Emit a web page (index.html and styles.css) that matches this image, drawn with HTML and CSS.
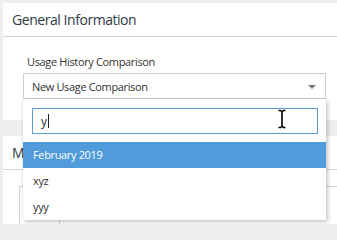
FILE: index.html
```html
<!DOCTYPE html>
<html>
<head>
<meta charset="utf-8">
<link rel="stylesheet" href="styles.css">
</head>
<body>
<div class="page">
  <section class="card card-general">
    <header class="card-header">General Information</header>
    <div class="card-body">
      <label class="field-label">Usage History Comparison</label>
      <div class="select-wrap">
        <div class="select">
          <span class="select-value">New Usage Comparison</span>
          <span class="select-arrow"></span>
        </div>
        <div class="dropdown">
          <div class="search">
            <span class="search-text">y</span><span class="caret"></span>
          </div>
          <ul class="options">
            <li class="option active">February 2019</li>
            <li class="option">xyz</li>
            <li class="option">yyy</li>
          </ul>
        </div>
      </div>
    </div>
  </section>
  <section class="card card-second">
    <header class="card-header">M</header>
    <div class="card-body2">
      <div class="table">
        <div class="cell"></div>
        <div class="cell wide"></div>
      </div>
    </div>
  </section>
</div>
<svg class="ibeam" width="10" height="20" viewBox="0 0 10 20">
  <path d="M1.5 1.5 H3.5 L5 2.8 L6.5 1.5 H8.5 M5 2.8 V17.2 M1.5 18.5 H3.5 L5 17.2 L6.5 18.5 H8.5" fill="none" stroke="#000" stroke-width="1.6"/>
</svg>
</body>
</html>
```

FILE: styles.css
```css
* { box-sizing: border-box; }
html, body { margin: 0; padding: 0; }
body {
  background: #efefef;
  font-family: "Open Sans", "DejaVu Sans", sans-serif;
  color: #333;
  width: 337px;
  height: 224px;
  overflow: hidden;
  position: relative;
}
.page {
  height: 224px;
  padding: 3px 0 0 3px;
  display: flex;
  flex-direction: column;
  gap: 16px;
}
.card { background: #fff; }
.card-header {
  height: 34px;
  border-bottom: 1px solid #d3d3d3;
  padding: 0 0 0 9px;
  font-size: 14px;
  letter-spacing: -0.45px;
  line-height: 33px;
  color: #2f3a45;
}
.card-body {
  padding: 17px 11px 21px 20px;
}
.field-label {
  display: block;
  font-size: 11px;
  letter-spacing: -0.35px;
  line-height: 16px;
  padding-left: 4px;
  margin-bottom: 3px;
  color: #333;
}
.select-wrap { position: relative; }
.select {
  height: 26px;
  border: 1px solid #cfcfcf;
  display: flex;
  align-items: center;
  justify-content: space-between;
  padding: 0 9px 0 8px;
}
.select-value { font-size: 11px; letter-spacing: -0.35px; color: #333; }
.select-arrow {
  width: 0; height: 0;
  border-left: 4px solid transparent;
  border-right: 4px solid transparent;
  border-top: 4px solid #7a7a7a;
  margin-top: 2px;
}
.dropdown {
  position: absolute;
  left: 0;
  right: 0;
  top: 26px;
  background: #fff;
  box-shadow: 2px 2px 4px rgba(0,0,0,0.22), -1px 0 2px rgba(0,0,0,0.08);
  padding: 9px 8px 0 9px;
  z-index: 5;
}
.search {
  height: 26px;
  border: 1px solid #5a9bd6;
  display: flex;
  align-items: center;
  padding-left: 8px;
  font-size: 12px;
}
.caret {
  display: inline-block;
  width: 1px;
  height: 14px;
  background: #222;
  margin-left: 1px;
}
.options {
  list-style: none;
  margin: 8px -8px 0 -9px;
  padding: 0;
}
.option {
  height: 26px;
  line-height: 26px;
  padding-left: 10px;
  font-size: 11px;
  letter-spacing: -0.35px;
  color: #333;
}
.option.active { background: #509bd9; color: #fff; }
.card-second { flex: 1; display: flex; flex-direction: column; }
.card-body2 { flex: 1; display: flex; padding: 16px 0 0 16px; }
.table {
  flex: 1;
  display: flex;
  border-top: 1px solid #d3d3d3;
  border-left: 1px solid #d3d3d3;
}
.cell { width: 40px; border-right: 1px solid #d3d3d3; }
.cell.wide { flex: 1; border-right: none; }
.ibeam {
  position: absolute;
  left: 277px;
  top: 109px;
  z-index: 10;
}
```
